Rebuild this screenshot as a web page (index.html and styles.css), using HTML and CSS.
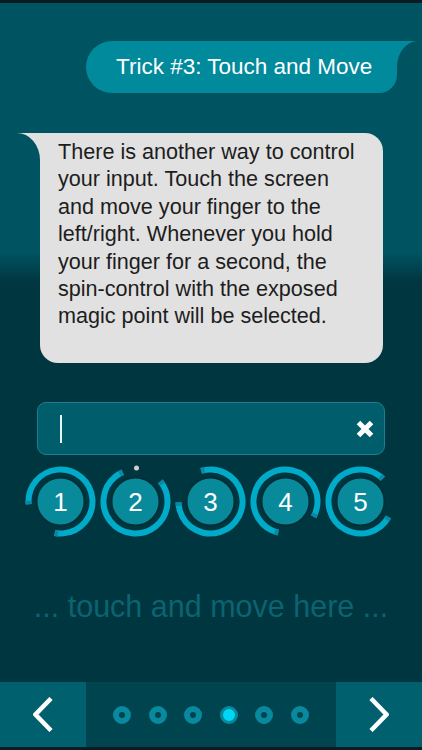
FILE: index.html
```html
<!DOCTYPE html>
<html lang="en">
<head>
<meta charset="utf-8">
<title>Trick #3: Touch and Move</title>
<link rel="stylesheet" href="styles.css">
</head>
<body>
<div class="screen">
  <div class="status"></div>

  <div class="row-top">
    <div class="bubble-top">
      Trick #3: Touch and Move
      <svg class="tail-right" width="21" height="26" viewBox="0 0 21 26"><path d="M0 0 H21 A21 26 0 0 0 0 26 Z"/></svg>
    </div>
  </div>

  <div class="bubble-gray">
    <svg class="tail-left" width="23" height="27" viewBox="0 0 23 27"><path d="M23 0 H0 A23 27 0 0 1 23 27 Z"/></svg>
    <p class="msg">There is another way to control<br>your input. Touch the screen<br>and move your finger to the<br>left/right. Whenever you hold<br>your finger for a second, the<br>spin-control with the exposed<br>magic point will be selected.</p>
  </div>

  <div class="input">
    <span class="cursor"></span>
    <svg class="clear" width="20" height="20" viewBox="0 0 20 20"><path d="M3.5 3.5 L16.5 16.5 M16.5 3.5 L3.5 16.5"/></svg>
  </div>

  <div class="spins">
    <svg class="spin" width="75" height="75" viewBox="0 0 75 75">
      <circle class="arc" cx="37.5" cy="37.5" r="32" transform="rotate(175 37.5 37.5)"/>
      <circle class="tick" cx="37.5" cy="37.5" r="32" transform="rotate(175 37.5 37.5)"/>
      <circle class="knob" cx="37.5" cy="37.5" r="24"/>
      <text class="num" x="37.5" y="47">1</text>
    </svg>
    <svg class="spin" width="75" height="75" viewBox="0 0 75 75">
      <circle class="arc" cx="37.5" cy="37.5" r="32" transform="rotate(-39 37.5 37.5)"/>
      <circle class="tick" cx="37.5" cy="37.5" r="32" transform="rotate(-39 37.5 37.5)"/>
      <circle class="knob" cx="37.5" cy="37.5" r="24"/>
      <circle class="magic" cx="38.5" cy="4" r="2.5"/>
      <text class="num" x="37.5" y="47">2</text>
    </svg>
    <svg class="spin" width="75" height="75" viewBox="0 0 75 75">
      <circle class="arc" cx="37.5" cy="37.5" r="32" transform="rotate(253 37.5 37.5)"/>
      <circle class="tick" cx="37.5" cy="37.5" r="32" transform="rotate(253 37.5 37.5)"/>
      <circle class="knob" cx="37.5" cy="37.5" r="24"/>
      <text class="num" x="37.5" y="47">3</text>
    </svg>
    <svg class="spin" width="75" height="75" viewBox="0 0 75 75">
      <circle class="arc" cx="37.5" cy="37.5" r="32" transform="rotate(103 37.5 37.5)"/>
      <circle class="tick" cx="37.5" cy="37.5" r="32" transform="rotate(103 37.5 37.5)"/>
      <circle class="knob" cx="37.5" cy="37.5" r="24"/>
      <text class="num" x="37.5" y="47">4</text>
    </svg>
    <svg class="spin" width="75" height="75" viewBox="0 0 75 75">
      <circle class="arc" cx="37.5" cy="37.5" r="32" transform="rotate(29 37.5 37.5)"/>
      <circle class="tick" cx="37.5" cy="37.5" r="32" transform="rotate(29 37.5 37.5)"/>
      <circle class="knob" cx="37.5" cy="37.5" r="24"/>
      <text class="num" x="37.5" y="47">5</text>
    </svg>
  </div>

  <div class="hint">... touch and move here ...</div>

  <div class="nav">
    <div class="nav-btn">
      <svg class="chev" width="20" height="35" viewBox="0 0 20 35"><path d="M18 1.5 L2.5 17.5 L18 33.5"/></svg>
    </div>
    <div class="dots">
      <span class="dot"></span>
      <span class="dot"></span>
      <span class="dot"></span>
      <span class="dot active"></span>
      <span class="dot"></span>
      <span class="dot"></span>
    </div>
    <div class="nav-btn">
      <svg class="chev" width="20" height="35" viewBox="0 0 20 35"><path d="M2 1.5 L17.5 17.5 L2 33.5"/></svg>
    </div>
  </div>
</div>
</body>
</html>
```

FILE: styles.css
```css
html, body {
  margin: 0;
  padding: 0;
}

body {
  width: 422px;
  height: 750px;
  overflow: hidden;
  font-family: "Liberation Sans", Arial, sans-serif;
  background: linear-gradient(to bottom, #005461 0px, #005461 252px, #003640 282px, #003640 100%);
}

.screen {
  height: 750px;
  display: flex;
  flex-direction: column;
}

.screen > * {
  flex-shrink: 0;
}

.status {
  height: 3px;
  background: #0a1c21;
}

/* top (outgoing) bubble */
.row-top {
  margin-top: 38px;
  padding-left: 86px;
  display: flex;
}

.bubble-top {
  position: relative;
  box-sizing: border-box;
  width: 311px;
  height: 52px;
  padding-left: 30px;
  background: #008a9c;
  border-radius: 26px 0 18px 26px;
  color: #ffffff;
  font-size: 22.5px;
  line-height: 52px;
  white-space: nowrap;
}

.tail-right {
  position: absolute;
  left: 100%;
  top: 0;
  display: block;
}

.tail-right path {
  fill: #008a9c;
}

/* gray (incoming) bubble */
.bubble-gray {
  position: relative;
  margin-top: 40px;
  margin-left: 40px;
  box-sizing: border-box;
  width: 343px;
  height: 230px;
  padding: 5px 0 0 18px;
  background: #e1e1e1;
  border-radius: 0 18px 18px 18px;
}

.tail-left {
  position: absolute;
  right: 100%;
  top: 0;
  display: block;
}

.tail-left path {
  fill: #e1e1e1;
}

.msg {
  margin: 0;
  color: #1d1d1d;
  font-size: 21.6px;
  line-height: 27.4px;
  white-space: nowrap;
}

/* input */
.input {
  margin-top: 39px;
  margin-left: 37px;
  box-sizing: border-box;
  width: 348px;
  height: 53px;
  border: 1px solid #1c7f8d;
  border-radius: 9px;
  background: #005e6c;
  display: flex;
  align-items: center;
  justify-content: space-between;
  padding: 0 9px 0 22px;
}

.cursor {
  display: block;
  width: 2px;
  height: 28px;
  background: #e8f4f6;
}

.clear {
  display: block;
}

.clear path {
  stroke: #ffffff;
  stroke-width: 5;
  fill: none;
}

/* spin controls */
.spins {
  margin-top: 9px;
  height: 75px;
  display: flex;
  justify-content: center;
  padding-right: 1px;
}

.spin {
  display: block;
}

.arc {
  fill: none;
  stroke: #00abc9;
  stroke-width: 6;
  stroke-dasharray: 159.2 201.1;
}

.tick {
  fill: none;
  stroke: #0a88a2;
  stroke-width: 6;
  stroke-dasharray: 3.5 152.2 3.5 42;
}

.knob {
  fill: #098a9b;
  stroke: #022f38;
  stroke-width: 2;
}

.magic {
  fill: #cfcfcf;
}

.num {
  fill: #ffffff;
  font-family: "Liberation Sans", Arial, sans-serif;
  font-size: 26px;
  text-anchor: middle;
}

/* hint */
.hint {
  margin-top: 47px;
  text-align: center;
  color: #0a6472;
  font-size: 30.5px;
  line-height: 40px;
  white-space: nowrap;
}

/* bottom navigation */
.nav {
  margin-top: auto;
  height: 65px;
  border-bottom: 3px solid #0a1c21;
  display: flex;
  background: #004450;
}

.nav-btn {
  width: 86px;
  background: #00606e;
  display: flex;
  align-items: center;
  justify-content: center;
}

.chev {
  display: block;
}

.chev path {
  fill: none;
  stroke: #ffffff;
  stroke-width: 4.5;
  stroke-linejoin: miter;
}

.dots {
  flex: 1;
  display: flex;
  align-items: center;
  justify-content: center;
  gap: 17.5px;
}

.dot {
  display: block;
  box-sizing: border-box;
  width: 18px;
  height: 18px;
  border-radius: 50%;
  border: 6px solid #08899d;
  background: #004450;
}

.dot.active {
  border-width: 3px;
  background: #00d6f6;
}
```
